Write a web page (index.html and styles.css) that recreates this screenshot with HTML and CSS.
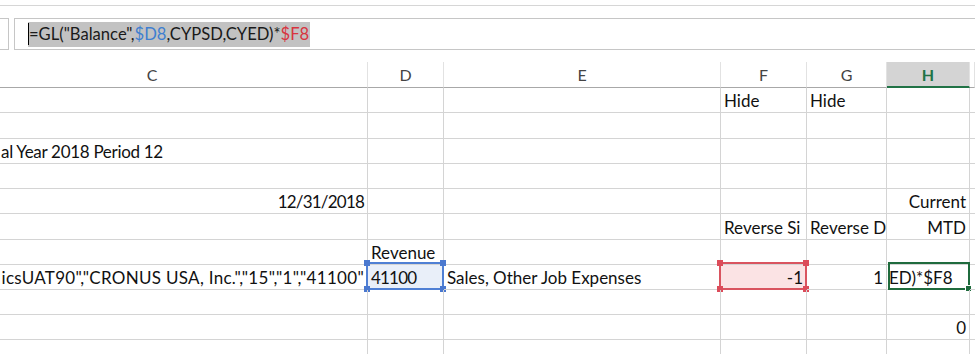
FILE: index.html
```html
<!DOCTYPE html>
<html lang="en">
<head>
  <meta charset="UTF-8" />
  <title>GL Balance report</title>
  <link rel="stylesheet" href="styles.css">
</head>
<body>
  <div class="ribbon-edge"></div>

  <div class="formula-bar">
    <div class="name-box"></div>
    <div class="formula-input">
      <span class="formula-sel"><span class="caret"></span>=GL("Balance",<span class="ref-blue">$D8</span>,CYPSD,CYED)*<span class="ref-red">$F8</span></span>
    </div>
  </div>

  <div class="sheet">
    <div class="row head">
      <div class="cell">C</div>
      <div class="cell">D</div>
      <div class="cell">E</div>
      <div class="cell">F</div>
      <div class="cell">G</div>
      <div class="cell active-col">H</div>
      <div class="cell"></div>
    </div>

    <div class="row">
      <div class="cell"></div>
      <div class="cell"></div>
      <div class="cell"></div>
      <div class="cell">Hide</div>
      <div class="cell">Hide</div>
      <div class="cell"></div>
      <div class="cell"></div>
    </div>

    <div class="row tall">
      <div class="cell"></div>
      <div class="cell"></div>
      <div class="cell"></div>
      <div class="cell"></div>
      <div class="cell"></div>
      <div class="cell"></div>
      <div class="cell"></div>
    </div>

    <div class="row">
      <div class="cell lead">al Year 2018 Period 12</div>
      <div class="cell"></div>
      <div class="cell"></div>
      <div class="cell"></div>
      <div class="cell"></div>
      <div class="cell"></div>
      <div class="cell"></div>
    </div>

    <div class="row">
      <div class="cell"></div>
      <div class="cell"></div>
      <div class="cell"></div>
      <div class="cell"></div>
      <div class="cell"></div>
      <div class="cell"></div>
      <div class="cell"></div>
    </div>

    <div class="row">
      <div class="cell right num">12/31/2018</div>
      <div class="cell"></div>
      <div class="cell"></div>
      <div class="cell"></div>
      <div class="cell"></div>
      <div class="cell right">Current</div>
      <div class="cell"></div>
    </div>

    <div class="row tall">
      <div class="cell"></div>
      <div class="cell"></div>
      <div class="cell"></div>
      <div class="cell">Reverse Si</div>
      <div class="cell">Reverse D</div>
      <div class="cell right">MTD</div>
      <div class="cell"></div>
    </div>

    <div class="row">
      <div class="cell"></div>
      <div class="cell">Revenue</div>
      <div class="cell"></div>
      <div class="cell"></div>
      <div class="cell"></div>
      <div class="cell"></div>
      <div class="cell"></div>
    </div>

    <div class="row">
      <div class="cell right wide">icsUAT90","CRONUS USA, Inc.","15","1","41100"</div>
      <div class="cell ref-cell blue">
        <span class="sel"><i class="h tl"></i><i class="h tr"></i><i class="h bl"></i><i class="h br"></i></span>
        <span class="val num">41100</span>
      </div>
      <div class="cell">Sales, Other Job Expenses</div>
      <div class="cell right ref-cell red">
        <span class="sel"><i class="h tl"></i><i class="h tr"></i><i class="h bl"></i><i class="h br"></i></span>
        <span class="val">-1</span>
      </div>
      <div class="cell right">1</div>
      <div class="cell edit-cell">
        <span class="active-box"><i class="fill-handle"></i></span>
        <span class="val edit-text">ED)*$F8</span>
      </div>
      <div class="cell"></div>
    </div>

    <div class="row">
      <div class="cell"></div>
      <div class="cell"></div>
      <div class="cell"></div>
      <div class="cell"></div>
      <div class="cell"></div>
      <div class="cell"></div>
      <div class="cell"></div>
    </div>

    <div class="row">
      <div class="cell"></div>
      <div class="cell"></div>
      <div class="cell"></div>
      <div class="cell"></div>
      <div class="cell"></div>
      <div class="cell right">0</div>
      <div class="cell"></div>
    </div>

    <div class="row">
      <div class="cell"></div>
      <div class="cell"></div>
      <div class="cell"></div>
      <div class="cell"></div>
      <div class="cell"></div>
      <div class="cell"></div>
      <div class="cell"></div>
    </div>
  </div>
</body>
</html>
```

FILE: styles.css
```css
html, body {
  margin: 0;
  height: 354px;
  overflow: hidden;
  background: #fff;
  font-family: Lato, "Open Sans", sans-serif;
  color: #111;
}

/* formula bar */

.ribbon-edge {
  height: 5px;
  border-bottom: 1px solid #d6d6d6;
}

.formula-bar {
  display: flex;
  gap: 5px;
  height: 32px;
  margin-top: 12px;
}

.name-box {
  width: 8px;
  border: 1px solid #c6c6c6;
  border-left: none;
}

.formula-input {
  flex: 1;
  display: flex;
  align-items: center;
  padding-left: 13px;
  border: 1px solid #c6c6c6;
  border-right: none;
}

.formula-sel {
  display: flex;
  align-items: center;
  height: 25px;
  padding-right: 1px;
  background: #c2c2c2;
  font-size: 16.6px;
  color: #1a1a1a;
  white-space: pre;
}

.caret {
  width: 1px;
  height: 22px;
  background: #000;
}

.ref-blue {
  color: #3f7fd0;
}

.ref-red {
  color: #d8343f;
}

/* grid */

.sheet {
  margin-top: 12px;
  margin-left: -63px;
}

.row {
  display: grid;
  grid-template-columns: 431px 76px 277px 86px 80px 83px 1fr;
  height: 25px;
}

.row.tall {
  height: 26px;
}

.cell {
  position: relative;
  display: flex;
  align-items: flex-end;
  padding: 0 3px 2px;
  border-right: 1px solid #d4d4d4;
  border-bottom: 1px solid #d4d4d4;
  overflow: hidden;
  white-space: nowrap;
  font-size: 17px;
  line-height: 19px;
}

.cell.right {
  justify-content: flex-end;
}

.cell.lead {
  padding-left: 64px;
  letter-spacing: -0.3px;
}

.num {
  letter-spacing: -0.8px;
}

.wide {
  letter-spacing: 0.3px;
}

.head {
  height: 26px;
}

.head .cell {
  align-items: center;
  justify-content: center;
  padding: 0;
  border-right-color: #e2e2e2;
  border-bottom-color: #a8a8a8;
  color: #444;
  font-size: 16px;
}

.head .active-col {
  background: #d4d4d4;
  border-bottom: 2px solid #217346;
  color: #217346;
  font-weight: bold;
}

/* referenced ranges and active cell */

.ref-cell,
.edit-cell {
  overflow: visible;
}

.val {
  position: relative;
}

.sel {
  position: absolute;
  top: -3px;
  left: -2px;
  right: -1px;
  bottom: -1px;
  border: 2px solid;
}

.blue {
  background: #e9eff9;
}

.blue .sel {
  border-color: #4f7fd4;
}

.red {
  background: #fbe3e4;
}

.red .sel {
  border-color: #d9545f;
}

.h {
  position: absolute;
  width: 6px;
  height: 6px;
}

.blue .h {
  background: #4a78cf;
}

.red .h {
  background: #dc4c5a;
}

.h.tl { top: -4px; left: -4px; }
.h.tr { top: -4px; right: -4px; }
.h.bl { bottom: -4px; left: -4px; }
.h.br { bottom: -4px; right: -4px; }

.edit-cell {
  padding-left: 2px;
}

.active-box {
  position: absolute;
  top: -3px;
  left: 1px;
  right: -1px;
  bottom: -1px;
  border: 2px solid #1f6b3d;
}

.fill-handle {
  position: absolute;
  right: -4px;
  bottom: -4px;
  width: 5px;
  height: 5px;
  background: #1f6b3d;
  border: 1px solid #fff;
}
```
